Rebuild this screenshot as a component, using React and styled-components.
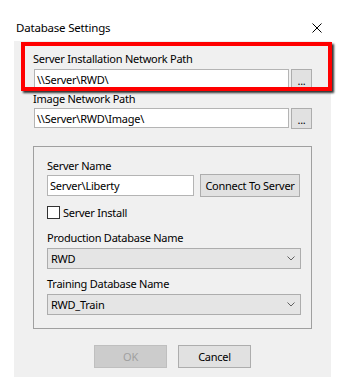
import React from "react";
import styled, { createGlobalStyle } from "styled-components";

const GlobalStyle = createGlobalStyle`
  html, body {
    margin: 0;
    padding: 0;
    background: #ffffff;
  }
  body {
    font-family: "Noto Sans", "Open Sans", sans-serif;
    font-size: 11px;
    color: #000000;
  }
`;

const Dialog = styled.div`
  width: 348px;
  height: 389px;
  background: #ffffff;
  display: flex;
  flex-direction: column;
`;

const TitleBar = styled.div`
  height: 41px;
  box-sizing: border-box;
  padding: 20px 26px 0 16px;
  display: flex;
  justify-content: space-between;
  align-items: flex-start;
`;

const Title = styled.span`
  font-size: 11.5px;
  line-height: 15px;
  letter-spacing: -0.2px;
`;

const CloseIcon = styled.svg`
  width: 10px;
  height: 10px;
  margin-top: 3px;
`;

const Body = styled.div`
  width: 317px;
  height: 336px;
  margin-left: 14px;
  box-sizing: border-box;
  background: #f0f0f0;
  padding: 10px 0 0 19px;
  display: flex;
  flex-direction: column;
`;

const Field = styled.div`
  position: relative;
  display: flex;
  flex-direction: column;
  margin-bottom: ${(p) => p.$gap || 0}px;
`;

const Highlight = styled.div`
  position: absolute;
  left: -12px;
  top: -9px;
  width: 311px;
  height: 49px;
  box-sizing: border-box;
  border: 4px solid #ff0000;
  box-shadow: 2px 2px 2px rgba(0, 0, 0, 0.8);
  pointer-events: none;
`;

const Label = styled.label`
  display: block;
  font-size: 11px;
  line-height: 15px;
  letter-spacing: -0.25px;
  margin-bottom: ${(p) => p.$gap ?? 3}px;
`;

const PathRow = styled.div`
  display: flex;
  align-items: flex-start;
  gap: 2px;
  margin-left: 1px;
`;

const TextBox = styled.div`
  width: ${(p) => p.$width}px;
  height: ${(p) => p.$height || 20}px;
  box-sizing: border-box;
  background: #ffffff;
  border: 1px solid #b4b4b4;
  padding-left: 2px;
  display: flex;
  align-items: center;
  font-size: 11px;
  letter-spacing: -0.25px;
  white-space: nowrap;
`;

const BrowseButton = styled.div`
  width: 21px;
  height: 21px;
  box-sizing: border-box;
  background: #e1e1e1;
  border: 1px solid #adadad;
  display: flex;
  justify-content: center;
  align-items: flex-end;
  padding-bottom: 3px;
  font-size: 11px;
  line-height: 10px;
  letter-spacing: -0.3px;
`;

const GroupBox = styled.div`
  width: 279px;
  box-sizing: border-box;
  margin-top: 17px;
  border: 1px solid #a0a0a0;
  padding: 11px 0 13px 13px;
  display: flex;
  flex-direction: column;
`;

const ServerRow = styled.div`
  display: flex;
  align-items: center;
  gap: 6px;
  height: 23px;
  margin-bottom: 7px;
`;

const Button = styled.div`
  width: ${(p) => p.$width}px;
  height: 23px;
  box-sizing: border-box;
  background: ${(p) => (p.$disabled ? "#cccccc" : "#e1e1e1")};
  border: 1px solid ${(p) => (p.$disabled ? "#bfbfbf" : "#adadad")};
  color: ${(p) => (p.$disabled ? "#a0a0a0" : "#000000")};
  display: flex;
  justify-content: center;
  align-items: center;
  font-size: 11px;
  letter-spacing: -0.25px;
  white-space: nowrap;
`;

const CheckRow = styled.div`
  display: flex;
  align-items: center;
  gap: 3px;
  height: 16px;
  margin-bottom: 10px;
  font-size: 11px;
  letter-spacing: -0.25px;
`;

const CheckBox = styled.div`
  width: 13px;
  height: 13px;
  box-sizing: border-box;
  background: #ffffff;
  border: 1px solid #333333;
`;

const Select = styled.div`
  width: 254px;
  height: 21px;
  box-sizing: border-box;
  background: #e5e5e5;
  border: 1px solid #adadad;
  padding: 0 5px 0 3px;
  display: flex;
  align-items: center;
  justify-content: space-between;
  font-size: 11px;
  letter-spacing: -0.25px;
  margin-bottom: ${(p) => p.$gap || 0}px;
`;

const Chevron = styled.svg`
  width: 8px;
  height: 5px;
`;

const Footer = styled.div`
  display: flex;
  justify-content: center;
  gap: 11px;
  margin: 16px 0 0 -19px;
`;

const ChevronDown = () => (
  <Chevron viewBox="0 0 8 5">
    <path d="M0.5 0.5 L4 4 L7.5 0.5" fill="none" stroke="#606060" strokeWidth="1" />
  </Chevron>
);

const App = () => {
  return (
    <>
      <GlobalStyle />
      <Dialog>
        <TitleBar>
          <Title>Database Settings</Title>
          <CloseIcon viewBox="0 0 10 10">
            <path d="M0.5 0.5 L9.5 9.5 M9.5 0.5 L0.5 9.5" stroke="#000" strokeWidth="1" />
          </CloseIcon>
        </TitleBar>
        <Body>
          <Field $gap={1}>
            <Highlight />
            <Label>Server Installation Network Path</Label>
            <PathRow>
              <TextBox $width={255}>{"\\\\Server\\RWD\\"}</TextBox>
              <BrowseButton>...</BrowseButton>
            </PathRow>
          </Field>
          <Field>
            <Label $gap={2}>Image Network Path</Label>
            <PathRow>
              <TextBox $width={255}>{"\\\\Server\\RWD\\Image\\"}</TextBox>
              <BrowseButton>...</BrowseButton>
            </PathRow>
          </Field>
          <GroupBox>
            <Label $gap={1}>Server Name</Label>
            <ServerRow>
              <TextBox $width={147} $height={21}>
                {"Server\\Liberty"}
              </TextBox>
              <Button $width={100}>Connect To Server</Button>
            </ServerRow>
            <CheckRow>
              <CheckBox />
              <span>Server Install</span>
            </CheckRow>
            <Label $gap={3}>Production Database Name</Label>
            <Select $gap={7}>
              <span>RWD</span>
              <ChevronDown />
            </Select>
            <Label $gap={3}>Training Database Name</Label>
            <Select>
              <span>RWD_Train</span>
              <ChevronDown />
            </Select>
          </GroupBox>
          <Footer>
            <Button $width={73} $disabled>
              OK
            </Button>
            <Button $width={73}>Cancel</Button>
          </Footer>
        </Body>
      </Dialog>
    </>
  );
};

export default App;
